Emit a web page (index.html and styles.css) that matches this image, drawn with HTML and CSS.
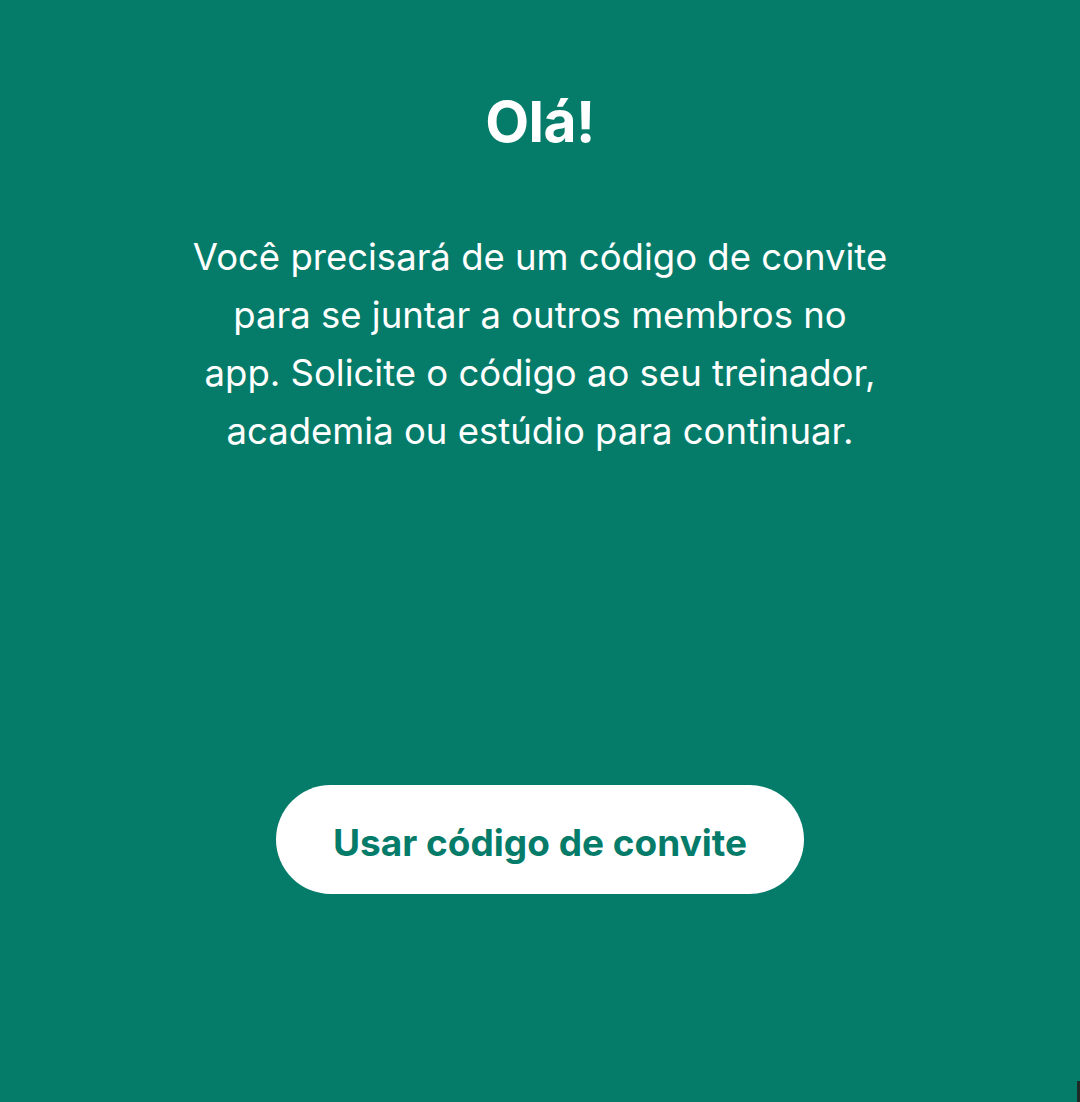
FILE: index.html
```html
<!DOCTYPE html>
<html lang="pt-BR">
<head>
<meta charset="utf-8">
<link rel="stylesheet" href="styles.css">
</head>
<body>
<main class="screen">
  <h1 class="title">Olá!</h1>
  <p class="intro">Você precisará de um código de convite<br>para se juntar a outros membros no<br>app. Solicite o código ao seu treinador,<br>academia ou estúdio para continuar.</p>
  <button class="invite">Usar código de convite</button>
  <span class="edge"></span>
</main>
</body>
</html>
```
FILE: styles.css
```css
html, body {
  margin: 0;
  padding: 0;
}
body {
  background: #057c6a;
  font-family: Inter, "Noto Sans", sans-serif;
}
.screen {
  position: relative;
  height: 1102px;
  display: flex;
  flex-direction: column;
  align-items: center;
  color: #ffffff;
}
.title {
  margin: 86px 0 0;
  font-size: 57px;
  line-height: 72px;
  font-weight: 700;
  letter-spacing: -0.5px;
}
.intro {
  margin: 70px 0 0;
  text-align: center;
  font-size: 36.5px;
  line-height: 58px;
  font-weight: 400;
  white-space: nowrap;
}
.invite {
  margin-top: 325px;
  width: 528px;
  height: 109px;
  border: none;
  border-radius: 55px;
  background: #ffffff;
  color: #057c6a;
  font-family: inherit;
  font-size: 37px;
  font-weight: 700;
  padding: 6px 0 0;
}
.edge {
  position: absolute;
  right: 0;
  bottom: 0;
  width: 3px;
  height: 21px;
  background: #1d2a26;
}
```
